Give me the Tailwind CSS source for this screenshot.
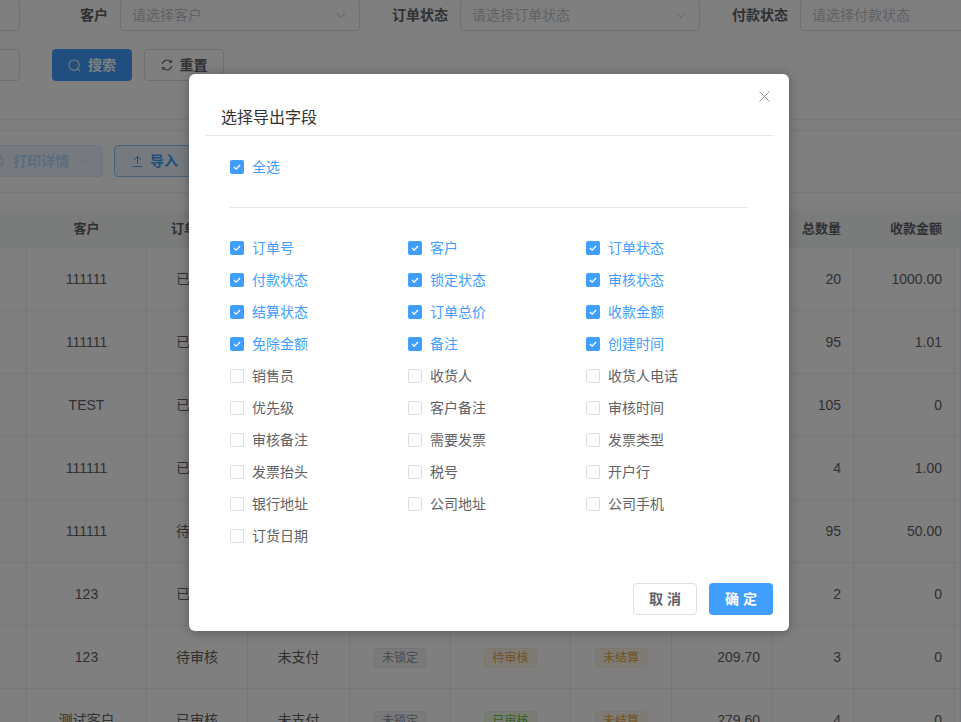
<!DOCTYPE html>
<html lang="zh-CN">
<head>
  <meta charset="UTF-8">
  <meta name="viewport" content="width=device-width, initial-scale=1.0">
  <title>选择导出字段</title>
  <script src="https://cdn.jsdelivr.net/npm/@tailwindcss/browser@4"></script>
</head>
<body class="bg-white font-['Liberation_Sans','Noto_Sans_CJK_SC',sans-serif] text-[14px] text-[#606266]">
  <div class="relative w-[961px] h-[722px] overflow-hidden">

    <!-- Search form -->
    <div class="h-[120px] border-b border-[#ebeef5] -mt-px box-content">
      <div class="flex gap-8 h-8 items-center">
        <div class="w-5 h-8 shrink-0 border border-l-0 border-[#dcdfe6] rounded-r"></div>
        <div class="flex items-center shrink-0">
          <label class="w-14 mr-3 text-right font-bold">客户</label>
          <div class="w-[240px] h-8 border border-[#dcdfe6] rounded px-[11px] flex items-center justify-between text-[#c0c4cc]">
            <span>请选择客户</span>
            <svg class="w-3 h-3 mr-px" viewBox="0 0 12 12" fill="none" stroke="currentColor"><path d="M1.500 4l4.500 4.500L10.500 4"/></svg>
          </div>
        </div>
        <div class="flex items-center shrink-0">
          <label class="w-14 mr-3 text-right font-bold">订单状态</label>
          <div class="w-[240px] h-8 border border-[#dcdfe6] rounded px-[11px] flex items-center justify-between text-[#c0c4cc]">
            <span>请选择订单状态</span>
            <svg class="w-3 h-3 mr-px" viewBox="0 0 12 12" fill="none" stroke="currentColor"><path d="M1.500 4l4.500 4.500L10.500 4"/></svg>
          </div>
        </div>
        <div class="flex items-center shrink-0">
          <label class="w-14 mr-3 text-right font-bold">付款状态</label>
          <div class="w-[240px] h-8 border border-[#dcdfe6] rounded px-[11px] flex items-center text-[#c0c4cc]">
            <span>请选择付款状态</span>
          </div>
        </div>
      </div>
      <div class="flex gap-8 mt-[18px] h-8">
        <div class="w-5 h-8 shrink-0 border border-l-0 border-[#dcdfe6] rounded-r"></div>
        <div class="flex gap-3">
          <button class="w-20 h-8 rounded bg-[#409eff] text-white font-bold flex items-center justify-center gap-[7px]">
            <svg class="w-[13px] h-[13px]" viewBox="0 0 14 14" fill="none" stroke="currentColor" stroke-width="1.100"><circle cx="6.500" cy="6.500" r="5.500"/><path d="M10.500 10.500l2.500 2.500"/></svg>
            搜索
          </button>
          <button class="w-20 h-8 rounded border border-[#dcdfe6] bg-white font-bold flex items-center justify-center gap-[7px]">
            <svg class="w-3 h-3" viewBox="0 0 12 12" fill="none" stroke="currentColor" stroke-width="1.100"><path d="M1.200 5A5 5 0 0 1 10 3M10.800 7A5 5 0 0 1 2 9"/><path d="M10.300 1v2.300H8M1.700 11V8.700H4"/></svg>
            重置
          </button>
        </div>
      </div>
    </div>

    <!-- Toolbar -->
    <div class="mt-[10px] h-[63px] pb-px border-y border-[#ebeef5] flex items-center gap-[11px] box-border">
      <button class="-ml-5 w-[123px] h-8 shrink-0 rounded border border-[#d9ecff] bg-[#ecf5ff] text-[#b3d8ff] font-bold flex items-center justify-end pr-[14px] gap-2">
        <svg class="w-[14px] h-[14px]" viewBox="0 0 14 14" fill="none" stroke="currentColor"><path d="M3.500 5V1.500h7V5M3.500 10.500h-2V5h11v5.500h-2M3.500 8.500h7v4h-7z"/></svg>
        打印详情
        <svg class="w-[11px] h-[11px]" viewBox="0 0 12 12" fill="none" stroke="currentColor"><path d="M1.500 4l4.500 4.500L10.500 4"/></svg>
      </button>
      <button class="w-[90px] h-8 shrink-0 rounded border border-[#8cc5ff] bg-[#ecf5ff] text-[#409eff] font-bold flex items-center pl-[17px] gap-[7px]">
        <svg class="w-[11px] h-[13px]" viewBox="0 0 11 13" fill="none" stroke="currentColor"><path d="M5.500 9V1.500M2 5l3.500-3.500L9 5M.5 11.500h10"/></svg>
        导入
      </button>
    </div>

    <!-- Order table -->
    <table class="mt-[18px] w-[961px] table-fixed border-separate border-spacing-0 [&_td]:border-r [&_td]:border-b [&_td]:border-[#ebeef5] [&_td]:px-3 [&_td]:text-center [&_th]:border-r [&_th]:border-b [&_th]:border-[#ebeef5] [&_th]:bg-[#f5f6f7] [&_th]:px-3 [&_th]:text-[13px] [&_th]:font-bold [&_th]:text-center">
      <colgroup>
        <col class="w-[27px]"><col class="w-[120px]"><col class="w-[101px]"><col class="w-[102px]"><col class="w-[101px]"><col class="w-[120px]"><col class="w-[101px]"><col class="w-[101px]"><col class="w-[81px]"><col class="w-[101px]"><col class="w-[6px]">
      </colgroup>
      <thead>
        <tr class="h-[37px]">
          <th></th><th>客户</th><th>订单状态</th><th>付款状态</th><th>锁定状态</th><th>审核状态</th><th>结算状态</th><th>订单总价</th><th class="text-right!">总数量</th><th class="text-right!">收款金额</th><th></th>
        </tr>
      </thead>
      <tbody>
        <tr class="h-[63px]"><td></td><td>111111</td><td>已审核</td><td></td><td></td><td></td><td></td><td></td><td class="text-right!">20</td><td class="text-right!">1000.00</td><td></td></tr>
        <tr class="h-[63px]"><td></td><td>111111</td><td>已审核</td><td></td><td></td><td></td><td></td><td></td><td class="text-right!">95</td><td class="text-right!">1.01</td><td></td></tr>
        <tr class="h-[63px]"><td></td><td>TEST</td><td>已审核</td><td></td><td></td><td></td><td></td><td></td><td class="text-right!">105</td><td class="text-right!">0</td><td></td></tr>
        <tr class="h-[63px]"><td></td><td>111111</td><td>已审核</td><td></td><td></td><td></td><td></td><td></td><td class="text-right!">4</td><td class="text-right!">1.00</td><td></td></tr>
        <tr class="h-[63px]"><td></td><td>111111</td><td>待审核</td><td></td><td></td><td></td><td></td><td></td><td class="text-right!">95</td><td class="text-right!">50.00</td><td></td></tr>
        <tr class="h-[63px]"><td></td><td>123</td><td>已审核</td><td></td><td></td><td></td><td></td><td></td><td class="text-right!">2</td><td class="text-right!">0</td><td></td></tr>
        <tr class="h-[63px]">
          <td></td><td>123</td><td>待审核</td><td>未支付</td>
          <td><span class="inline-block h-5 px-[7px] leading-[18px] text-xs rounded border border-[#e9e9eb] bg-[#f4f4f5] text-[#909399]">未锁定</span></td>
          <td><span class="inline-block h-5 px-[7px] leading-[18px] text-xs rounded border border-[#faecd8] bg-[#fdf6ec] text-[#e6a23c]">待审核</span></td>
          <td><span class="inline-block h-5 px-[7px] leading-[18px] text-xs rounded border border-[#faecd8] bg-[#fdf6ec] text-[#e6a23c]">未结算</span></td>
          <td class="text-right!">209.70</td><td class="text-right!">3</td><td class="text-right!">0</td><td></td>
        </tr>
        <tr class="h-[63px]">
          <td></td><td>测试客户</td><td>已审核</td><td>未支付</td>
          <td><span class="inline-block h-5 px-[7px] leading-[18px] text-xs rounded border border-[#e9e9eb] bg-[#f4f4f5] text-[#909399]">未锁定</span></td>
          <td><span class="inline-block h-5 px-[7px] leading-[18px] text-xs rounded border border-[#e1f3d8] bg-[#f0f9eb] text-[#67c23a]">已审核</span></td>
          <td><span class="inline-block h-5 px-[7px] leading-[18px] text-xs rounded border border-[#faecd8] bg-[#fdf6ec] text-[#e6a23c]">未结算</span></td>
          <td class="text-right!">279.60</td><td class="text-right!">4</td><td class="text-right!">0</td><td></td>
        </tr>
      </tbody>
    </table>

    <!-- Dialog mask -->
    <div class="absolute inset-0 bg-black/50"></div>

    <!-- Export fields dialog -->
    <div id="dialog" class="absolute left-[189px] top-[74px] w-[600px] h-[557px] bg-white rounded-md shadow-[0_1px_12px_rgba(0,0,0,0.3)]">
      <svg class="absolute right-[19px] top-[17px] w-[11px] h-[11px] text-[#909399]" viewBox="0 0 12 12" fill="none" stroke="currentColor"><path d="M.5.5l11 11M11.500.5l-11 11"/></svg>
      <div class="ml-[17px] mr-4 h-[62px] border-b border-[#e4e7ed] pt-[32px] pl-[15px] text-base leading-6 text-[#303133]">选择导出字段</div>

      <div class="mt-[15px] ml-[41px] w-[518px]">
        <label class="flex items-center gap-2 h-8 text-[#409eff]">
          <span class="w-[14px] h-[14px] rounded-[2px] bg-[#409eff] flex items-center justify-center"><svg class="w-[10px] h-[10px]" viewBox="0 0 10 10" fill="none" stroke="white" stroke-width="1.200"><path d="M2 5l2.200 2.200L8 3"/></svg></span>
          全选
        </label>
        <div class="mt-6 border-t border-[#e4e7ed]"></div>
        <div id="fields" class="mt-6 grid grid-cols-[178px_178px_162px] auto-rows-[32px]"></div>
      </div>

      <div class="absolute right-4 bottom-4 flex gap-3">
        <button class="w-16 h-8 rounded border border-[#dcdfe6] bg-white text-[#606266] font-bold">取 消</button>
        <button class="w-16 h-8 rounded bg-[#409eff] text-white font-bold">确 定</button>
      </div>
    </div>
  </div>

  <script>
    const checked = ['订单号', '客户', '订单状态', '付款状态', '锁定状态', '审核状态', '结算状态', '订单总价', '收款金额', '免除金额', '备注', '创建时间'];
    const unchecked = ['销售员', '收货人', '收货人电话', '优先级', '客户备注', '审核时间', '审核备注', '需要发票', '发票类型', '发票抬头', '税号', '开户行', '银行地址', '公司地址', '公司手机', '订货日期'];
    const box = '<svg class="w-[10px] h-[10px]" viewBox="0 0 10 10" fill="none" stroke="white" stroke-width="1.200"><path d="M2 5l2.200 2.200L8 3"/></svg>';
    const fields = document.getElementById('fields');
    checked.forEach((name) => {
      fields.insertAdjacentHTML('beforeend', `<label class="flex items-center gap-2 h-8 text-[#409eff]"><span class="w-[14px] h-[14px] rounded-[2px] bg-[#409eff] flex items-center justify-center">${box}</span>${name}</label>`);
    });
    unchecked.forEach((name) => {
      fields.insertAdjacentHTML('beforeend', `<label class="flex items-center gap-2 h-8 text-[#606266]"><span class="w-[14px] h-[14px] rounded-[2px] border border-[#dcdfe6] bg-white"></span>${name}</label>`);
    });
  </script>
</body>
</html>
